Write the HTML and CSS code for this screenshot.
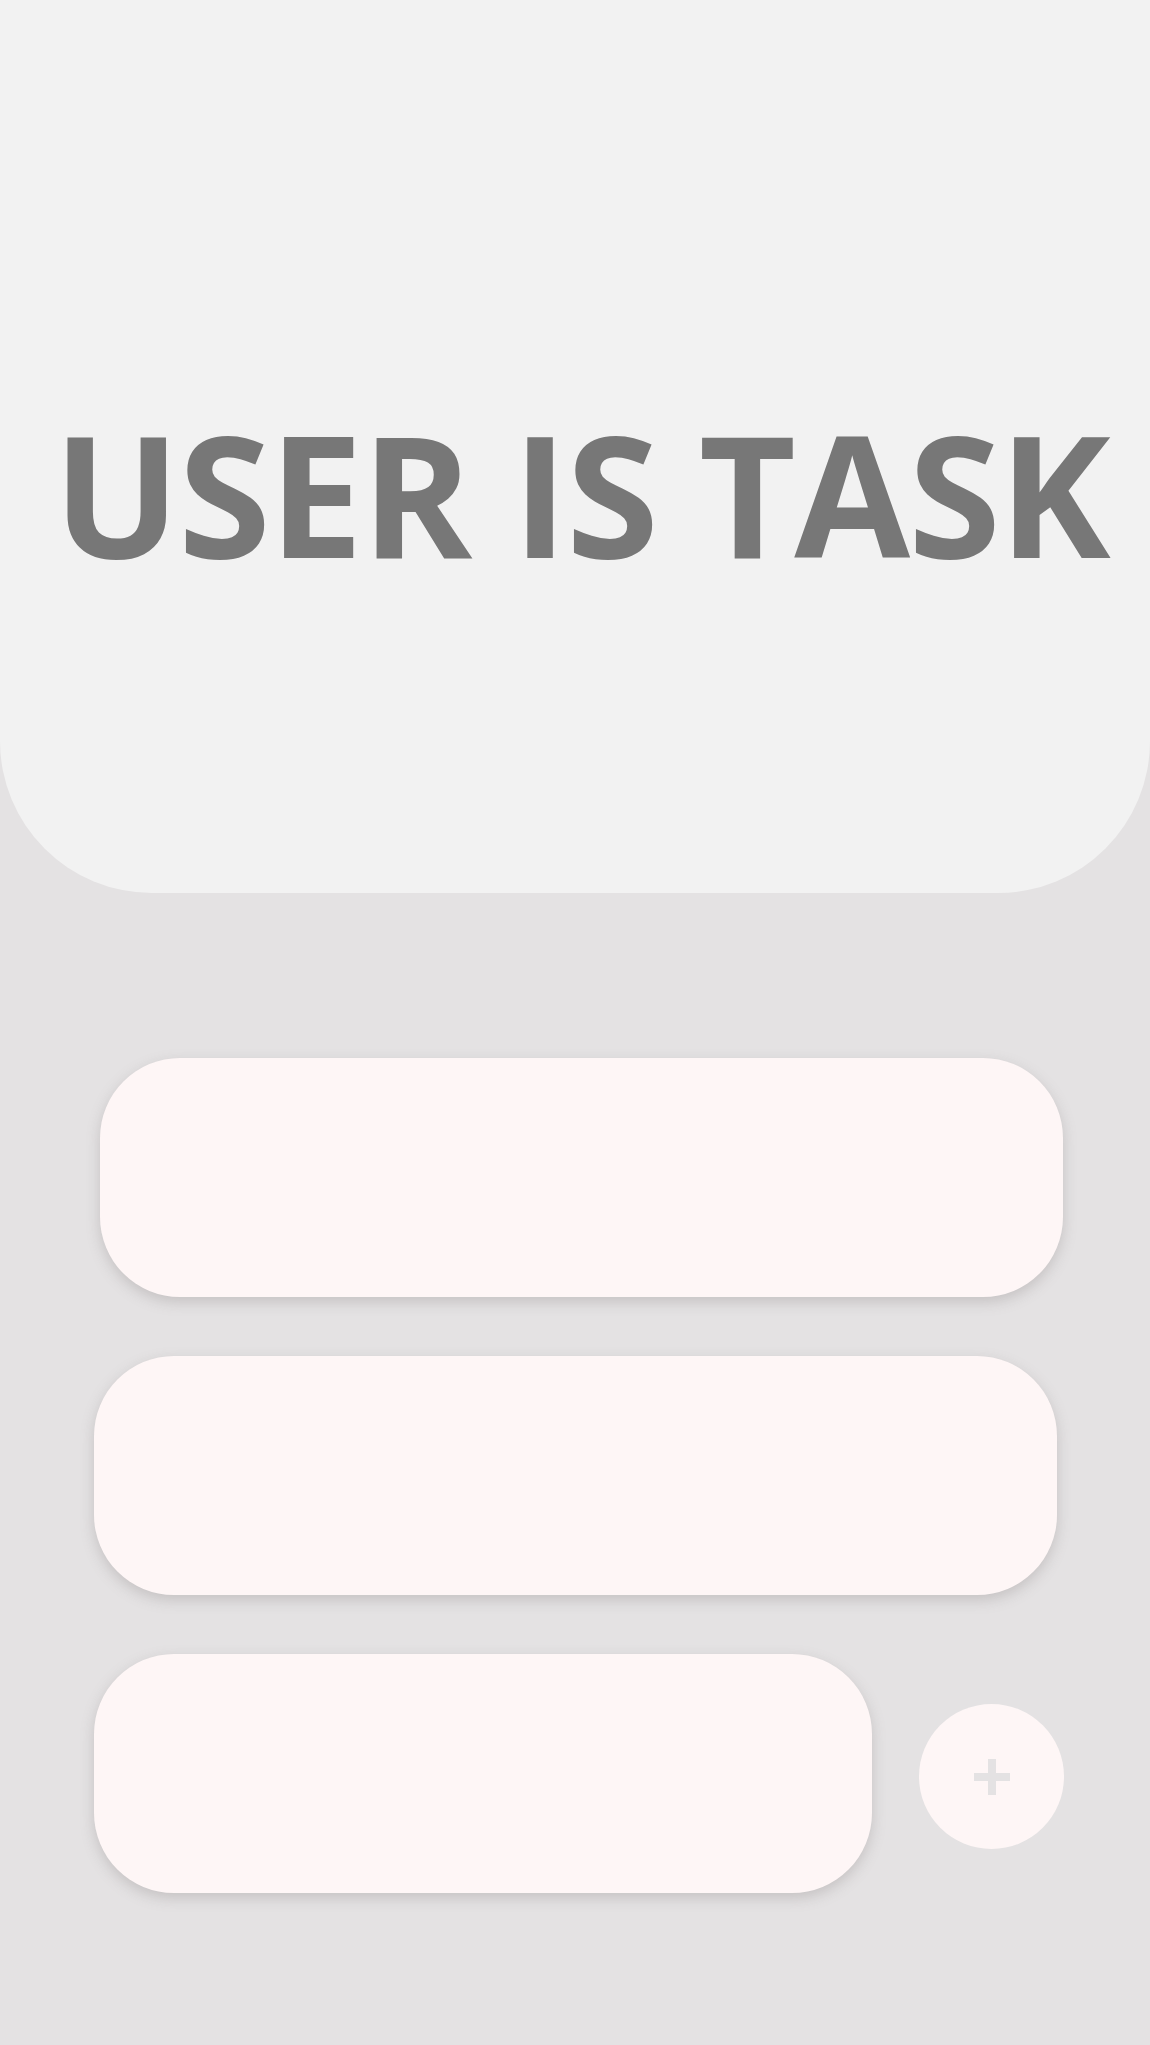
FILE: index.html
```html
<!DOCTYPE html>
<html lang="en">
<head>
<meta charset="utf-8">
<title>User is task</title>
<link rel="stylesheet" href="styles.css">
</head>
<body>
<header class="hero">
  <h1 class="hero-title">USER IS TASK</h1>
</header>
<main class="tasks">
  <div class="card card-first"></div>
  <div class="card"></div>
  <div class="row">
    <div class="card card-short"></div>
    <button class="add-btn" aria-label="Add task">
      <svg width="36" height="36" viewBox="0 0 36 36" aria-hidden="true">
        <rect x="0" y="14" width="36" height="8" fill="#e4e2e3"/>
        <rect x="14" y="0" width="8" height="36" fill="#e4e2e3"/>
      </svg>
    </button>
  </div>
</main>
</body>
</html>
```
FILE: styles.css
```css
html, body {
  margin: 0;
  padding: 0;
}
body {
  background: #e4e2e3;
  min-height: 2045px;
  font-family: "Open Sans", "Noto Sans", sans-serif;
}
.hero {
  height: 893px;
  background: #f2f2f2;
  border-radius: 0 0 152px 152px;
  display: flex;
  align-items: center;
  justify-content: center;
  box-sizing: border-box;
  padding-top: 92px;
  padding-left: 12px;
}
.hero-title {
  margin: 0;
  font-size: 168px;
  font-weight: 700;
  color: #777777;
  letter-spacing: -1.8px;
  white-space: nowrap;
  line-height: 1;
}
.tasks {
  padding: 165px 0 0 94px;
  display: flex;
  flex-direction: column;
  gap: 59px;
}
.card {
  width: 963px;
  height: 239px;
  background: #fef6f6;
  border-radius: 80px;
  box-shadow: 0 5px 14px rgba(120, 110, 112, 0.28);
}
.card-first {
  margin-left: 6px;
}
.row {
  display: flex;
  align-items: center;
  gap: 47px;
}
.card-short {
  width: 778px;
}
.add-btn {
  width: 145px;
  height: 145px;
  border-radius: 50%;
  border: none;
  padding: 0;
  background: #fef6f6;
  display: flex;
  align-items: center;
  justify-content: center;
  margin-top: 6px;
}
.add-btn svg {
  display: block;
}
```
